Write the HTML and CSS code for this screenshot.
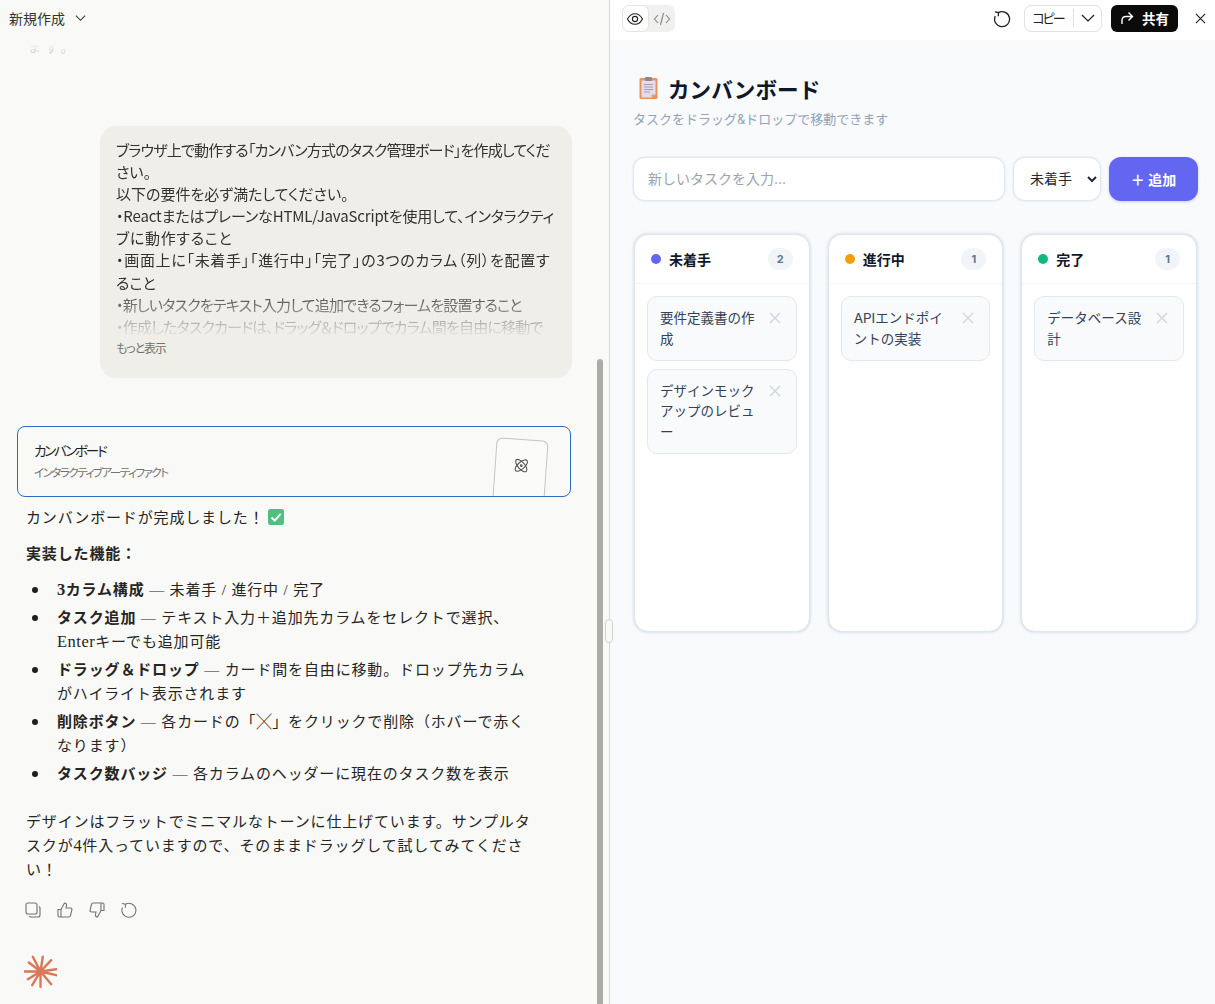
FILE: index.html
```html
<!doctype html>
<html lang="ja">
<head>
	<title>カンバンボード</title>
	<meta charset="utf-8">
	<link rel="stylesheet" href="styles.css">
</head>
<body>
	<section class="chat">
		<header class="chat-head">
			<span>新規作成</span>
			<svg class="chev" viewBox="0 0 12 8"><path d="M1 1.5 6 6.5 11 1.5"/></svg>
		</header>
		<div class="tail"><span>ます。</span></div>

		<div class="bubble">
			<div class="bubble-text">
				<div class="tight">ブラウザ上で動作する「カンバン方式のタスク管理ボード」を作成してくだ</div>
				<div>さい。</div>
				<div>以下の要件を必ず満たしてください。</div>
				<div class="snug">・ReactまたはプレーンなHTML/JavaScriptを使用して、インタラクティ</div>
				<div class="wide">ブに動作すること</div>
				<div class="wide">・画面上に「未着手」「進行中」「完了」の3つのカラム（列）を配置す</div>
				<div>ること</div>
				<div class="tight">・新しいタスクをテキスト入力して追加できるフォームを設置すること</div>
				<div class="tight">・作成したタスクカードは、ドラッグ＆ドロップでカラム間を自由に移動で</div>
			</div>
			<div class="more">もっと表示</div>
		</div>

		<div class="artifact">
			<div>
				<div class="artifact-title">カンバンボード</div>
				<div class="artifact-sub">インタラクティブアーティファクト</div>
			</div>
			<div class="thumb">
				<svg viewBox="0 0 20 20"><g><ellipse cx="10" cy="10" rx="9" ry="4" transform="rotate(45 10 10)"/><ellipse cx="10" cy="10" rx="9" ry="4" transform="rotate(-45 10 10)"/><circle cx="10" cy="10" r="1"/></g></svg>
			</div>
		</div>

		<div class="reply">
			<p>カンバンボードが完成しました！<svg class="check" viewBox="0 0 16 16"><rect width="16" height="16" rx="2.5"/><path d="M3.5 8.5 6.8 11.6 12.6 4.8"/></svg></p>
			<p><b>実装した機能：</b></p>
			<ul>
				<li><b><span class="latin">3</span>カラム構成</b> — 未着手 / 進行中 / 完了</li>
				<li><b>タスク追加</b> — テキスト入力＋追加先カラムをセレクトで選択、<span class="latin">Enter</span>キーでも追加可能</li>
				<li><b>ドラッグ＆ドロップ</b> — カード間を自由に移動。ドロップ先カラムがハイライト表示されます</li>
				<li><b>削除ボタン</b> — 各カードの「╳」をクリックで削除（ホバーで赤くなります）</li>
				<li><b>タスク数バッジ</b> — 各カラムのヘッダーに現在のタスク数を表示</li>
			</ul>
			<p>デザインはフラットでミニマルなトーンに仕上げています。サンプルタスクが<span class="latin">4</span>件入っていますので、そのままドラッグして試してみてください！</p>
		</div>

		<div class="actions">
			<svg viewBox="0 0 16 16"><rect x="1" y="1" width="11" height="11" rx="2"/><path d="M14 4.500c.7.3 1 .9 1 1.600V13a2 2 0 0 1-2 2H6c-.7 0-1.300-.4-1.600-1"/></svg>
			<svg viewBox="0 0 16 16"><path d="M1 7.500h3V15H2.500A1.500 1.500 0 0 1 1 13.500zM4 7.500 7.500 1c1.500 0 2.300 1 2 2.500L9 6h4.500c1 0 1.700.9 1.400 1.900l-1.400 5.800c-.2.800-.9 1.300-1.700 1.300H4"/></svg>
			<svg viewBox="0 0 16 16"><path d="M15 8.500h-3V1h1.500A1.500 1.500 0 0 1 15 2.500zM12 8.500 8.500 15c-1.500 0-2.300-1-2-2.500L7 10H2.500c-1 0-1.700-.9-1.400-1.900l1.400-5.800C2.700 1.500 3.400 1 4.200 1H12"/></svg>
			<svg viewBox="0 0 16 16"><path d="M4.500 2.200A7 7 0 1 1 1.500 5.500M4.300 5.800 4.500 2.200 1 1.500"/></svg>
		</div>

		<svg class="logo" viewBox="0 0 33 33">
			<circle cx="16.500" cy="16.500" r="3.500"/>
			<path d="M16.500 16.500 8.800 1.800M16.500 16.500 18.800 1.800M16.500 16.500 27.200 5.200M16.500 16.500 32.200 14.200M16.500 16.500 32.200 20.200M16.500 16.500 27.200 29.200M16.500 16.500 16.500 31.800M16.500 16.500 8.200 30.200M16.500 16.500 3.800 24.200M16.500 16.500 .5 16.500M16.500 16.500 4.800 7.500"/>
		</svg>

		<div class="scrollbar"></div>
	</section>

	<div class="grip"></div>

	<section class="preview">
		<header class="toolbar">
			<div class="toggle">
				<span class="toggle-btn on">
					<svg viewBox="0 0 18 18"><path d="M1.500 9C3.300 5.500 5.800 3.700 9 3.700s5.700 1.800 7.500 5.300c-1.800 3.500-4.300 5.300-7.500 5.300S3.300 12.500 1.500 9z"/><circle cx="9" cy="9" r="2.600"/></svg>
				</span>
				<span class="toggle-btn">
					<svg viewBox="0 0 18 18"><path d="M5 5 1.500 9 5 13M13 5l3.500 4L13 13M10.500 3 7.500 15"/></svg>
				</span>
			</div>
			<div class="tools">
				<svg class="reload" viewBox="0 0 18 18"><path d="M5.500 2.600A7.500 7.500 0 1 1 2.300 6M5.300 6.200 5.500 2.600 2 1.800"/></svg>
				<div class="copy">
					<span class="copy-label">コピー</span>
					<span class="copy-arrow"><svg viewBox="0 0 14 8"><path d="M1 1 7 7 13 1"/></svg></span>
				</div>
				<div class="share">
					<svg viewBox="0 0 14 14"><path d="M2 13V9.500C2 7 3.500 5.500 6 5.500h6M8.500 1.500 12.500 5.500 8.500 9.500"/></svg>
					<span>共有</span>
				</div>
				<svg class="close" viewBox="0 0 12 12"><path d="M1 1 11 11M11 1 1 11"/></svg>
			</div>
		</header>

		<main class="board-page">
			<h1>
				<svg class="clip" viewBox="0 0 20 24">
					<rect x="1" y="2" width="18" height="21" rx="1.500" fill="#e8935a"/>
					<path d="M3 4.500h14v14l-4 3H3z" fill="#e3dcec"/>
					<path d="M13 21.500v-3h4z" fill="#c9a98f"/>
					<rect x="6.500" y="1" width="7" height="4" rx="1" fill="#8d8794"/>
					<path d="M5.500 8.500h9M5.500 11h9M5.500 13.500h9M5.500 16h6" stroke="#a59fb0" stroke-width="1"/>
				</svg>
				カンバンボード
			</h1>
			<p class="subtitle">タスクをドラッグ&amp;ドロップで移動できます</p>

			<form class="add-form">
				<input type="text" placeholder="新しいタスクを入力...">
				<select>
					<option>未着手</option>
					<option>進行中</option>
					<option>完了</option>
				</select>
				<button type="button">＋ 追加</button>
			</form>

			<div class="board">
				<div class="column">
					<div class="col-head">
						<span class="dot todo"></span>
						<span class="col-title">未着手</span>
						<span class="badge">2</span>
					</div>
					<div class="cards">
						<div class="card"><span>要件定義書の作成</span><svg viewBox="0 0 12 12"><path d="M1 1 11 11M11 1 1 11"/></svg></div>
						<div class="card"><span>デザインモックアップのレビュー</span><svg viewBox="0 0 12 12"><path d="M1 1 11 11M11 1 1 11"/></svg></div>
					</div>
				</div>
				<div class="column">
					<div class="col-head">
						<span class="dot doing"></span>
						<span class="col-title">進行中</span>
						<span class="badge">1</span>
					</div>
					<div class="cards">
						<div class="card"><span>APIエンドポイントの実装</span><svg viewBox="0 0 12 12"><path d="M1 1 11 11M11 1 1 11"/></svg></div>
					</div>
				</div>
				<div class="column">
					<div class="col-head">
						<span class="dot done"></span>
						<span class="col-title">完了</span>
						<span class="badge">1</span>
					</div>
					<div class="cards">
						<div class="card"><span>データベース設計</span><svg viewBox="0 0 12 12"><path d="M1 1 11 11M11 1 1 11"/></svg></div>
					</div>
				</div>
			</div>
		</main>
	</section>
</body>
</html>
```

FILE: styles.css
```css
* {
	box-sizing: border-box;
}
html, body {
	height: 100%;
}
body {
	display: flex;
	margin: 0;
	overflow: hidden;
	position: relative;
	font-family: "Noto Sans CJK JP", "Noto Sans", sans-serif;
	color: #1f1e1d;
}
svg {
	fill: none;
	stroke: currentColor;
	flex: none;
}

/* left side */
.chat {
	width: 610px;
	flex: none;
	height: 100%;
	position: relative;
	background: #f9f9f7;
	border-right: 1px solid #d6d6d4;
	overflow: hidden;
}
.chat-head {
	height: 40px;
	padding: 0 0 5px 9px;
	display: flex;
	align-items: center;
	gap: 10px;
	font-size: 14px;
	color: #33322f;
}
.chev {
	width: 11px;
	height: 8px;
	stroke-width: 1.100;
}
.tail {
	height: 19px;
	padding-left: 28px;
	display: flex;
	align-items: flex-end;
	overflow: hidden;
	font-size: 13px;
	line-height: 24px;
	letter-spacing: 4px;
	color: #c9c8c5;
	-webkit-mask-image: linear-gradient(transparent 4px, #000 14px);
	mask-image: linear-gradient(transparent 4px, #000 14px);
}
.bubble {
	width: 472px;
	height: 252px;
	margin: 67px 0 48px 100px;
	padding: 13px 16px 0;
	background: #f0eee9;
	border-radius: 16px;
}
.bubble-text {
	height: 199px;
	overflow: hidden;
	font-size: 15px;
	line-height: 22.1px;
	white-space: nowrap;
	color: #33322f;
	font-feature-settings: "palt";
	-webkit-mask-image: linear-gradient(#000 150px, transparent 199px);
	mask-image: linear-gradient(#000 150px, transparent 199px);
}
.tight { letter-spacing: -0.8px; }
.snug { letter-spacing: -0.15px; }
.wide { letter-spacing: 0.7px; }
.more {
	font-size: 12px;
	line-height: 20px;
	letter-spacing: -1.200px;
	color: #73726c;
	font-feature-settings: "palt";
}
.artifact {
	width: 554px;
	height: 71px;
	margin-left: 17px;
	padding: 12px 0 0 16px;
	display: flex;
	justify-content: space-between;
	border: 1px solid #2c6cc0;
	border-radius: 8px;
	overflow: hidden;
	font-feature-settings: "palt";
}
.artifact-title {
	font-size: 13.500px;
	line-height: 22px;
	letter-spacing: -2.200px;
	color: #1f1e1d;
}
.artifact-sub {
	margin-top: 1px;
	font-size: 11.500px;
	line-height: 20px;
	letter-spacing: -1.500px;
	color: #73726c;
}
.thumb {
	width: 52px;
	height: 76px;
	margin-right: 24px;
	display: flex;
	justify-content: center;
	padding-top: 17px;
	background: #fbfbfa;
	border: 1px solid #c4c4c0;
	border-radius: 6px;
	transform: rotate(4deg);
}
.thumb svg {
	width: 17px;
	height: 17px;
	color: #55544f;
	stroke-width: 1.300;
}
.reply {
	width: 510px;
	margin: 9px 0 0 26px;
	font-family: "Liberation Serif", "Noto Sans CJK JP", serif;
	font-size: 15px;
	line-height: 24px;
	letter-spacing: 0.85px;
	color: #262522;
}
.reply p {
	margin: 0 0 12px;
}
.reply ul {
	margin: 0 0 24px;
	padding-left: 31px;
	list-style: none;
}
.reply li {
	position: relative;
	margin-bottom: 4px;
}
.reply li::before {
	content: "";
	position: absolute;
	left: -25px;
	top: 9px;
	width: 6px;
	height: 6px;
	border-radius: 50%;
	background: #1f1e1d;
}
.latin {
	font-size: 16.500px;
	letter-spacing: 0.5px;
}
.reply p:last-child {
	margin: 0;
}
.check {
	width: 16px;
	height: 16px;
	margin-left: 3px;
	vertical-align: -2px;
}
.check rect {
	fill: #52bf80;
	stroke: none;
}
.check path {
	stroke: #fff;
	stroke-width: 1.800;
}
.actions {
	margin: 20px 0 0 25px;
	display: flex;
	gap: 16px;
	color: #73726c;
}
.actions svg {
	width: 16px;
	height: 16px;
	stroke-width: 1.100;
}
.logo {
	display: block;
	width: 33px;
	height: 33px;
	margin: 37px 0 0 24px;
	color: #d97757;
	stroke-width: 2.400;
	stroke-linecap: round;
}
.logo circle {
	fill: currentColor;
	stroke: none;
}
.scrollbar {
	position: absolute;
	top: 359px;
	bottom: 0;
	left: 597px;
	width: 6px;
	border-radius: 3px 3px 0 0;
	background: #ababa8;
}
.grip {
	position: absolute;
	top: 619px;
	left: 605px;
	width: 8px;
	height: 24px;
	background: #f9f9f7;
	border: 1px solid #d2d2ce;
	border-radius: 4px;
}

/* right side */
.preview {
	flex: 1;
	display: flex;
	flex-direction: column;
	min-width: 0;
	font-family: Inter, "Noto Sans CJK JP", sans-serif;
}
.toolbar {
	height: 40px;
	flex: none;
	padding: 5px 5px 8px 12px;
	display: flex;
	justify-content: space-between;
	background: #fff;
}
.toggle {
	display: flex;
	height: 27px;
	background: #f0f0ee;
	border-radius: 7px;
}
.toggle-btn {
	width: 26.500px;
	display: flex;
	align-items: center;
	justify-content: center;
	border-radius: 7px;
	color: #888783;
}
.toggle-btn.on {
	background: #fff;
	border: 1px solid #e4e4e1;
	color: #1f1e1d;
}
.toggle-btn svg {
	width: 18px;
	height: 18px;
	stroke-width: 1.100;
}
.tools {
	display: flex;
	align-items: center;
	font-family: "Noto Sans CJK JP", sans-serif;
}
.reload {
	width: 18px;
	height: 18px;
	margin-right: 13px;
	stroke-width: 1.300;
	color: #1f1e1d;
}
.copy {
	display: flex;
	align-items: center;
	width: 78px;
	height: 27px;
	padding-bottom: 1px;
	border: 1px solid #e2e2df;
	border-radius: 7px;
	font-size: 13px;
	font-feature-settings: "palt";
	color: #1f1e1d;
}
.copy-label {
	width: 49px;
	padding-right: 2px;
	text-align: center;
	letter-spacing: -2px;
	border-right: 1px solid #dededb;
	line-height: 18px;
}
.copy-arrow {
	flex: 1;
	display: flex;
	justify-content: center;
}
.copy-arrow svg {
	width: 14px;
	height: 8px;
	stroke-width: 1.200;
}
.share {
	margin-left: 9px;
	width: 67px;
	height: 27px;
	display: flex;
	align-items: center;
	justify-content: center;
	gap: 8px;
	padding-bottom: 1px;
	background: #0b0b0b;
	border-radius: 6px;
	color: #fff;
	font-size: 13.500px;
	font-weight: 700;
}
.share svg {
	width: 14px;
	height: 14px;
	stroke-width: 1.400;
}
.close {
	width: 11px;
	height: 11px;
	margin-left: 17px;
	margin-right: 4px;
	stroke-width: 1.200;
	color: #1f1e1d;
}
.board-page {
	flex: 1;
	padding: 30px 17px 0 23px;
	background: #f8fafc;
}
h1 {
	margin: 0;
	padding-left: 5px;
	display: flex;
	align-items: center;
	gap: 9px;
	height: 36px;
	font-size: 21.600px;
	font-weight: 700;
	color: #0f172a;
}
.clip {
	width: 21px;
	height: 24px;
	stroke: none;
}
.subtitle {
	margin: 3px 0 0;
	font-size: 13px;
	line-height: 21px;
	color: #94a3b8;
}
.add-form {
	display: flex;
	gap: 8px;
	margin-top: 27px;
	height: 44px;
}
.add-form input,
.add-form select {
	font-family: inherit;
	font-size: 14px;
	background: #fff;
	border: 1px solid #e2e8f0;
	border-radius: 12px;
	color: #1f2937;
	box-shadow: 0 0 2px rgba(148, 163, 184, 0.35);
}
.add-form input {
	flex: 1;
	min-width: 0;
	padding: 0 14px 2px;
}
.add-form input::placeholder {
	color: #9ca3af;
}
.add-form select {
	width: 88px;
	padding: 0 0 1px 12px;
}
.add-form button {
	width: 89px;
	padding-bottom: 2px;
	border: none;
	border-radius: 12px;
	background: #6366f1;
	color: #fff;
	font-family: inherit;
	font-size: 14px;
	font-weight: 700;
	box-shadow: 0 1px 3px rgba(99, 102, 241, 0.3);
}
.board {
	display: flex;
	gap: 18px;
	margin: 33px 1px 0;
}
.column {
	flex: 1;
	height: 398px;
	background: #fff;
	border: 1px solid #dfe6ef;
	border-radius: 14px;
	box-shadow: 0 0 3px rgba(148, 163, 184, 0.5);
}
.col-head {
	height: 49px;
	padding: 0 16px;
	display: flex;
	align-items: center;
	border-bottom: 1px solid #f1f5f9;
}
.dot {
	width: 10px;
	height: 10px;
	border-radius: 50%;
	margin-right: 8px;
}
.dot.todo { background: #6366f1; }
.dot.doing { background: #f59e0b; }
.dot.done { background: #10b981; }
.col-title {
	flex: 1;
	font-size: 14px;
	font-weight: 700;
	color: #0f172a;
}
.badge {
	min-width: 25px;
	height: 22px;
	line-height: 22px;
	text-align: center;
	border-radius: 11px;
	background: #f1f5f9;
	color: #64748b;
	font-size: 11px;
	font-weight: 700;
}
.cards {
	padding: 12px;
	display: flex;
	flex-direction: column;
	gap: 8px;
}
.card {
	display: flex;
	justify-content: space-between;
	gap: 12px;
	padding: 11px 15px 10px 12px;
	background: #f8fafc;
	border: 1px solid #e2e8f0;
	border-radius: 10px;
	font-size: 13.500px;
	line-height: 20.800px;
	color: #334155;
}
.card svg {
	width: 12px;
	height: 12px;
	margin-top: 4px;
	color: #cbd5e1;
	stroke-width: 1.300;
}
```
